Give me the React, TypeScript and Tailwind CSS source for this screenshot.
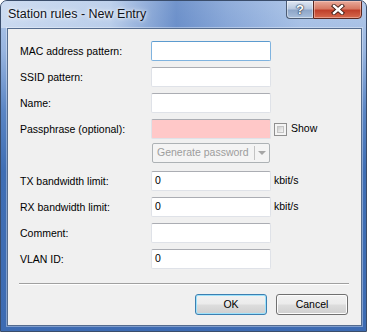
import React from 'react';

const font = 'font-["Liberation_Sans",Arial,sans-serif]';

const fields = [
  { label: 'MAC address pattern:', value: '', focus: true },
  { label: 'SSID pattern:', value: '' },
  { label: 'Name:', value: '' },
];

function TextBox({ value = '', pink = false, focus = false }: { value?: string; pink?: boolean; focus?: boolean }) {
  return (
    <div
      className={`w-[120px] h-[20px] rounded-[2px] border flex items-center pl-[3px] text-[10.5px] text-black
        ${focus ? 'border-[#7fb3df] border-t-[#5c9bcf]' : 'border-[#dfe2e8] border-t-[#abadb3]'}
        ${pink ? 'bg-[#ffc8c8]' : 'bg-white'}`}
    >
      {value}
    </div>
  );
}

function Row({ label, children, className = '' }: { label: string; children: React.ReactNode; className?: string }) {
  return (
    <div className={`flex items-center h-[20px] ${className}`}>
      <span className="w-[131px] text-[10.5px] text-black leading-none">{label}</span>
      {children}
    </div>
  );
}

function Button({ label, primary = false }: { label: string; primary?: boolean }) {
  return (
    <div
      className={`w-[72px] h-[21px] rounded-[3px] border flex items-center justify-center text-[10.5px] text-black
        bg-[linear-gradient(180deg,#f2f2f2_0%,#ebebeb_48%,#dddddd_52%,#cfcfcf_100%)]
        ${primary ? 'border-[#3c7fb1] shadow-[inset_0_0_0_1px_#9ee2fb]' : 'border-[#707070] shadow-[inset_0_0_0_1px_#fcfcfc]'}`}
    >
      {label}
    </div>
  );
}

export default function App() {
  return (
    <div className={`w-[367px] h-[332px] flex flex-col border border-[#3a4d6b] rounded-t-[7px] overflow-hidden ${font}
      bg-[linear-gradient(180deg,#b3c9e9_0px,#98b5e0_50px,#5a85c4_110px,#3f6eb4_170px,#3d6bb2_100%)]`}>
      {/* Title bar */}
      <div className="h-[27px] flex items-start shrink-0 pr-[4px] bg-[linear-gradient(90deg,rgba(214,226,243,0.75)_0%,rgba(198,215,238,0.6)_30%,rgba(60,105,180,0.55)_48%,rgba(80,122,192,0.35)_62%,rgba(170,196,232,0.3)_82%,rgba(180,202,234,0.2)_100%)]">
        <span className="ml-[7px] mt-[7px] text-[12.5px] text-[#10131a] leading-none [text-shadow:0_0_6px_#ffffff,0_0_3px_#ffffff]">
          Station rules - New Entry
        </span>
        <div className="ml-auto flex -mt-px">
          <div className="w-[27px] h-[19px] border border-[#4b5b73] border-r-0 rounded-bl-[4px] flex items-center justify-center
            bg-[linear-gradient(180deg,#dfe7f3_0%,#b9c9df_45%,#8ea6c8_55%,#a9bfdc_100%)] shadow-[inset_0_0_0_1px_rgba(255,255,255,0.45)]">
            <span className="text-[13px] font-bold text-white leading-none [text-shadow:0_0_1px_#28364c,0_0_1px_#28364c,0_0_2px_#28364c]">?</span>
          </div>
          <div className="w-[49px] h-[19px] border border-[#5b2720] rounded-br-[4px] flex items-center justify-center
            bg-[linear-gradient(180deg,#e9ab9c_0%,#d77a64_45%,#c0402b_55%,#d66a4e_100%)] shadow-[inset_0_0_0_1px_rgba(255,220,210,0.45)]">
            <svg width="14" height="11" viewBox="0 0 14 11">
              <path d="M3 2 L11 9 M11 2 L3 9" stroke="#3b1a14" strokeWidth="4.2" strokeLinecap="square" />
              <path d="M3 2 L11 9 M11 2 L3 9" stroke="#ffffff" strokeWidth="2.4" strokeLinecap="square" />
            </svg>
          </div>
        </div>
      </div>

      {/* Client area */}
      <div className="ml-[6px] mr-[4px] mb-[5px] h-[298px] border border-[#556c8e] bg-[#f0f0f0] flex flex-col pl-[12px] pr-[13px] pt-[12px] shadow-[0_0_0_1px_rgba(255,255,255,0.35)]">
        <Row label={fields[0].label}>
          <TextBox focus />
        </Row>
        <Row label={fields[1].label} className="mt-[6px]">
          <TextBox />
        </Row>
        <Row label={fields[2].label} className="mt-[6px]">
          <TextBox />
        </Row>
        <Row label="Passphrase (optional):" className="mt-[6px]">
          <TextBox pink />
          <div className="ml-[3px] w-[13px] h-[13px] border border-[#8f8f8f] bg-[#f4f4f4] p-[2px]">
            <div className="w-full h-full border border-[#c4c4c4] bg-[linear-gradient(135deg,#cbcbcb_0%,#e6e6e6_60%,#f6f6f6_100%)]" />
          </div>
          <span className="ml-[4px] text-[10.5px] text-black">Show</span>
        </Row>
        <div className="flex h-[20px] mt-[4px] pl-[132px]">
          <div className="w-[118px] h-[20px] rounded-[2px] border border-[#adb2b5] bg-[#f4f4f4] flex items-center">
            <span className="pl-[4px] text-[10.5px] text-[#9d9d9d] flex-1 whitespace-nowrap">Generate password</span>
            <div className="w-px h-[14px] bg-[#c3c3c3]" />
            <div className="w-[14px] flex justify-center">
              <svg width="8" height="4" viewBox="0 0 8 4">
                <path d="M0 0 H8 L4 4 Z" fill="#a6a6a6" />
              </svg>
            </div>
          </div>
        </div>
        <Row label="TX bandwidth limit:" className="mt-[8px]">
          <TextBox value="0" />
          <span className="ml-[3px] text-[10.5px] text-black">kbit/s</span>
        </Row>
        <Row label="RX bandwidth limit:" className="mt-[6px]">
          <TextBox value="0" />
          <span className="ml-[3px] text-[10.5px] text-black">kbit/s</span>
        </Row>
        <Row label="Comment:" className="mt-[6px]">
          <TextBox />
        </Row>
        <Row label="VLAN ID:" className="mt-[6px]">
          <TextBox value="0" />
        </Row>

        <div className="mt-[14px] -ml-px mr-[-1px] h-[2px] border-t border-[#a0a0a0] border-b border-b-white" />

        <div className="flex justify-end gap-[9px] mt-[9px]">
          <Button label="OK" primary />
          <Button label="Cancel" />
        </div>
      </div>
    </div>
  );
}
